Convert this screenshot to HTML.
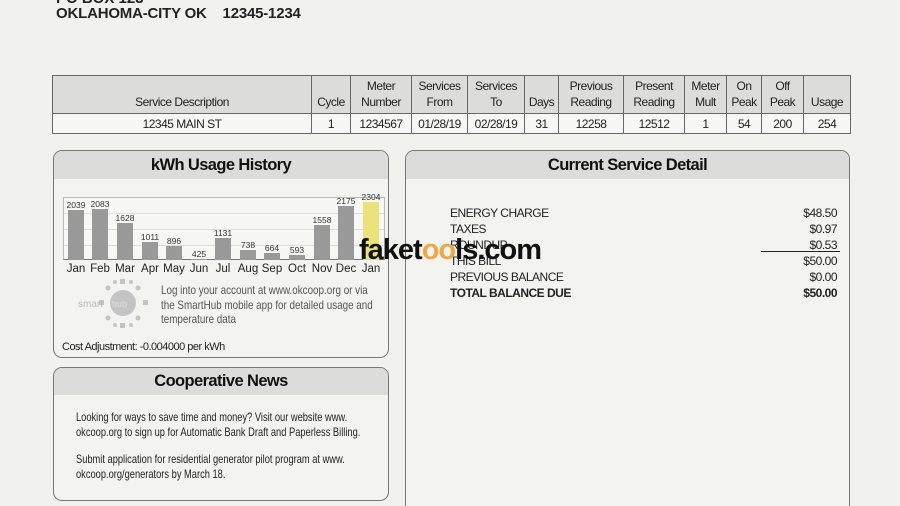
<!DOCTYPE html>
<html style="width:900px;height:506px;overflow:hidden"><head><meta charset="utf-8"><style>
*{margin:0;padding:0;box-sizing:border-box}
body{width:900px;height:506px;overflow:hidden;background:#f1f1ee;font-family:"Liberation Sans",Arial,sans-serif;color:#222;position:relative}
.a{position:absolute}
.n{letter-spacing:-0.5px}
table{position:absolute;left:52px;top:75px;width:799px;border-collapse:collapse;font-size:12px;letter-spacing:-0.5px}
td{border:1.5px solid #666;text-align:center;vertical-align:bottom;line-height:16px;padding:0 1px}
tr.h td{background:#dcdcda;height:38px;padding-bottom:3px}
tr.d td{background:#f7f7f5;height:20px;vertical-align:middle}
.panel{position:absolute;border:1.5px solid #777;border-radius:9px;background:#f3f3f0;overflow:hidden}
.ph{background:#dcdcda;height:28px;text-align:center;font-size:16.5px;font-weight:bold;line-height:28px;letter-spacing:-0.6px;color:#111}
.bar{position:absolute;width:16px;background:#999;bottom:0}
.lbl{position:absolute;font-size:8.5px;width:30px;text-align:center;color:#333}
.mo{position:absolute;top:263px;font-size:11.5px;width:30px;text-align:center;color:#222}
.sq{transform:scaleX(0.82);transform-origin:0 0;white-space:nowrap}
.sq2{transform:scaleX(0.775);transform-origin:0 0;white-space:nowrap}
</style></head><body>
<div class="a" style="left:56px;top:-10px;font-size:15px;font-weight:bold;color:#222">PO BOX 123</div>
<div class="a" style="left:56px;top:5px;font-size:15px;font-weight:bold;color:#222;letter-spacing:-0.2px">OKLAHOMA-CITY OK &nbsp;&nbsp; 12345-1234</div>
<table>
<colgroup><col style="width:259px"><col style="width:39px"><col style="width:61px"><col style="width:56px"><col style="width:57px"><col style="width:34px"><col style="width:65px"><col style="width:61px"><col style="width:42px"><col style="width:35px"><col style="width:42px"><col style="width:47px"></colgroup>
<tr class="h"><td>Service Description</td><td>Cycle</td><td>Meter<br>Number</td><td>Services<br>From</td><td>Services<br>To</td><td>Days</td><td>Previous<br>Reading</td><td>Present<br>Reading</td><td>Meter<br>Mult</td><td>On<br>Peak</td><td>Off<br>Peak</td><td>Usage</td></tr>
<tr class="d"><td>12345 MAIN ST</td><td>1</td><td>1234567</td><td>01/28/19</td><td>02/28/19</td><td>31</td><td>12258</td><td>12512</td><td>1</td><td>54</td><td>200</td><td>254</td></tr>
</table>

<div class="panel" style="left:53px;top:150px;width:336px;height:208px">
<div class="ph">kWh Usage History</div>
</div>
<div class="a" style="left:63px;top:197px;width:322px;height:63px;border:1px solid #bbb;border-bottom:1.5px solid #777;background:#f7f7f5">
<div class="a" style="left:0;right:0;top:15px;border-top:1px solid #ddd"></div>
<div class="a" style="left:0;right:0;top:31px;border-top:1px solid #ddd"></div>
<div class="a" style="left:0;right:0;top:47px;border-top:1px solid #ddd"></div>
</div>
<div class="a" style="left:0;top:260px;width:0;height:0">
<div class="bar" style="left:68px;height:50px"></div>
<div class="bar" style="left:92px;height:51px"></div>
<div class="bar" style="left:117px;height:37px"></div>
<div class="bar" style="left:142px;height:18px"></div>
<div class="bar" style="left:166px;height:14px"></div>
<div class="bar" style="left:191px;height:1px"></div>
<div class="bar" style="left:215px;height:22px"></div>
<div class="bar" style="left:240px;height:10px"></div>
<div class="bar" style="left:264px;height:7px"></div>
<div class="bar" style="left:289px;height:5px"></div>
<div class="bar" style="left:314px;height:35px"></div>
<div class="bar" style="left:338px;height:54px"></div>
<div class="bar" style="left:363px;height:58px;background:#ece27a"></div>
</div>
<div class="lbl" style="left:61px;top:200px">2039</div>
<div class="lbl" style="left:85px;top:199px">2083</div>
<div class="lbl" style="left:110px;top:213px">1628</div>
<div class="lbl" style="left:135px;top:232px">1011</div>
<div class="lbl" style="left:159px;top:236px">896</div>
<div class="lbl" style="left:184px;top:249px">425</div>
<div class="lbl" style="left:208px;top:228px">1131</div>
<div class="lbl" style="left:233px;top:240px">738</div>
<div class="lbl" style="left:257px;top:243px">664</div>
<div class="lbl" style="left:282px;top:245px">593</div>
<div class="lbl" style="left:307px;top:215px">1558</div>
<div class="lbl" style="left:331px;top:196px">2175</div>
<div class="lbl" style="left:356px;top:192px">2304</div>
<div class="mo" style="left:61px">Jan</div><div class="mo" style="left:85px">Feb</div><div class="mo" style="left:110px">Mar</div><div class="mo" style="left:135px">Apr</div><div class="mo" style="left:159px">May</div><div class="mo" style="left:184px">Jun</div><div class="mo" style="left:208px">Jul</div><div class="mo" style="left:233px">Aug</div><div class="mo" style="left:257px">Sep</div><div class="mo" style="left:282px">Oct</div><div class="mo" style="left:307px">Nov</div><div class="mo" style="left:331px">Dec</div><div class="mo" style="left:356px">Jan</div>
<svg class="a" style="left:70px;top:278px" width="80" height="54">
<g fill="#c4c4c4">
<circle cx="53" cy="25" r="13"/>
<rect x="50" y="1" width="5" height="5"/><rect x="50" y="45" width="5" height="5"/>
<rect x="29" y="22" width="5" height="5"/><rect x="73" y="22" width="5" height="5"/>
<circle cx="38" cy="10" r="2.5"/><circle cx="68" cy="10" r="2.5"/><circle cx="38" cy="40" r="2.5"/><circle cx="68" cy="40" r="2.5"/>
<circle cx="45" cy="4" r="2"/><circle cx="61" cy="4" r="2"/><circle cx="45" cy="47" r="2"/><circle cx="61" cy="47" r="2"/>
</g>
<text x="8" y="29" font-size="10" fill="#bbb" font-family="Liberation Sans">smart</text>
<text x="42" y="29" font-size="9" fill="#ddd" font-family="Liberation Sans">hub</text>
</svg>
<div class="a sq" style="left:161px;top:283px;font-size:12px;line-height:14.5px;color:#555">Log into your account at www.okcoop.org or via<br>the SmartHub mobile app for detailed usage and<br>temperature data</div>
<div class="a n" style="left:62px;top:341px;font-size:11px;color:#222">Cost Adjustment: -0.004000 per kWh</div>

<div class="panel" style="left:53px;top:367px;width:336px;height:134px">
<div class="ph" style="height:27px;line-height:27px">Cooperative News</div>
<div class="sq2" style="position:absolute;left:22px;top:42px;font-size:12px;line-height:15px;color:#222">Looking for ways to save time and money? Visit our website www.<br>okcoop.org to sign up for Automatic Bank Draft and Paperless Billing.</div>
<div class="sq2" style="position:absolute;left:22px;top:84px;font-size:12px;line-height:15px;color:#222">Submit application for residential generator pilot program at www.<br>okcoop.org/generators by March 18.</div>
</div>

<div class="panel" style="left:405px;top:150px;width:445px;height:356px;border-bottom:none;border-radius:9px 9px 0 0">
<div class="ph">Current Service Detail</div>
</div>
<div class="a n" style="left:450px;top:205px;font-size:12px;line-height:16px;color:#222">ENERGY CHARGE<br>TAXES<br>ROUNDUP<br>THIS BILL<br>PREVIOUS BALANCE<br><b>TOTAL BALANCE DUE</b></div>
<div class="a n" style="left:760px;width:77px;top:205px;font-size:12px;line-height:16px;color:#222;text-align:right">$48.50<br>$0.97<br>$0.53<br>$50.00<br>$0.00<br><b>$50.00</b></div>
<div class="a" style="left:761px;top:251px;width:79px;border-top:1px solid #222"></div>
<div class="a" style="left:359px;top:234px;font-size:29px;font-weight:bold;color:#111;letter-spacing:-1px">faket<span style="color:#f0a64a">oo</span>ls.com</div>
</body></html>
